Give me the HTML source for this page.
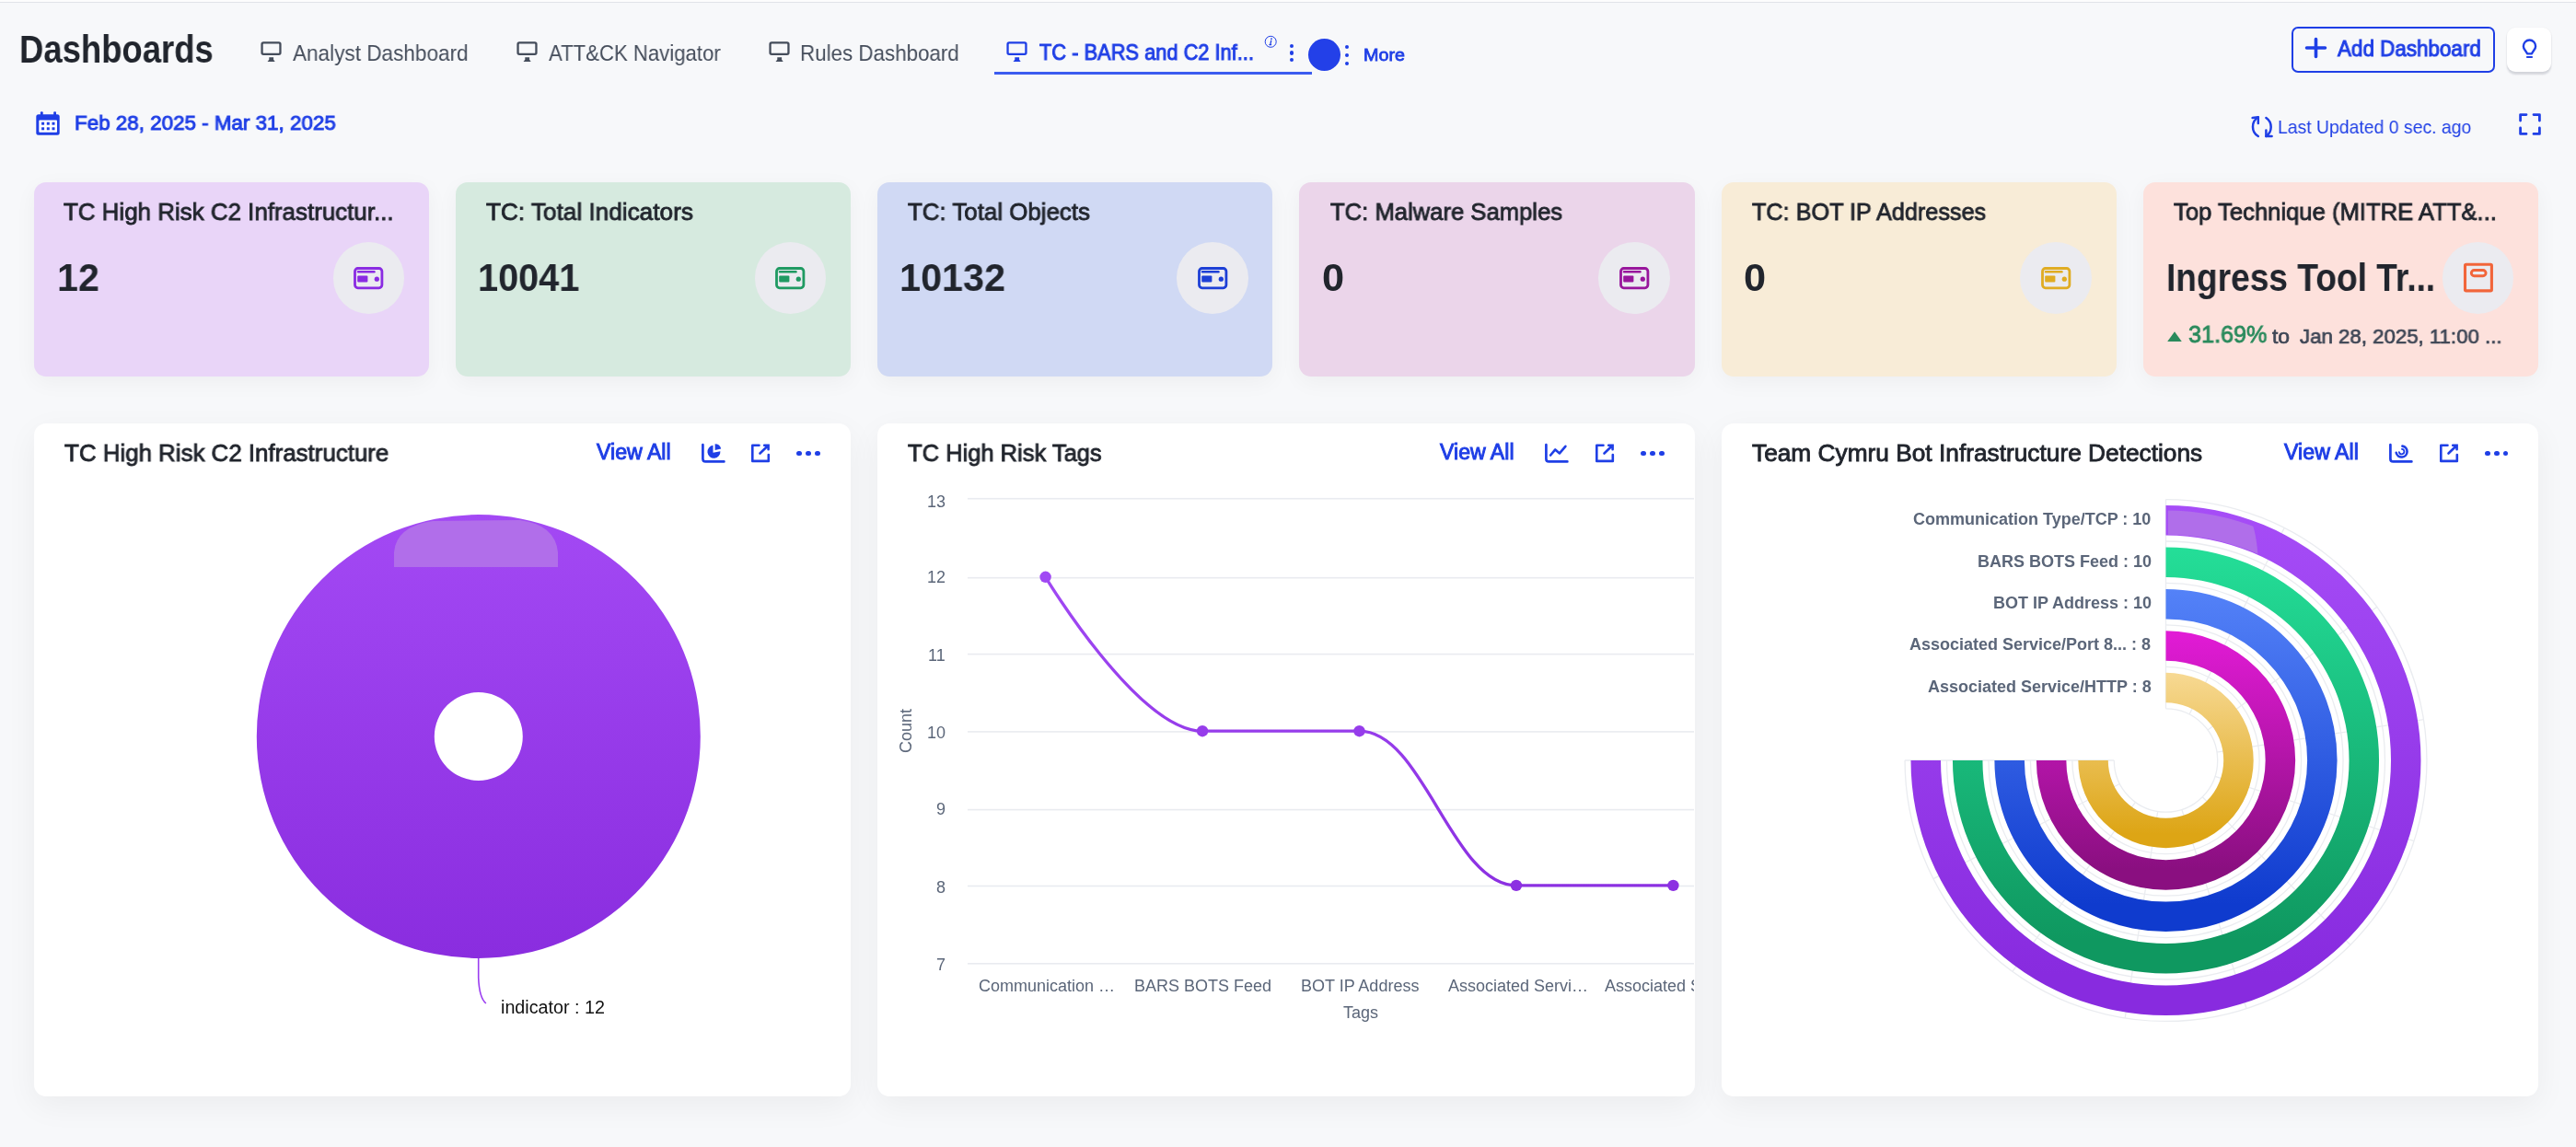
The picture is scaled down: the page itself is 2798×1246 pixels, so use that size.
<!DOCTYPE html><html><head><meta charset="utf-8"><style>
html,body{margin:0;padding:0;background:#f7f8fa}
body{width:2798px;height:1246px;position:relative;overflow:hidden;background:#f7f8fa;font-family:"Liberation Sans",sans-serif}
.t{position:absolute;line-height:0;white-space:pre;transform-origin:0 0;will-change:transform}
.abs{position:absolute}
.card{position:absolute;border-radius:13px;box-shadow:0 6px 24px rgba(0,0,0,0.045)}
.panel{position:absolute;border-radius:13px;background:#fff;box-shadow:0 10px 34px rgba(0,0,0,0.05);overflow:hidden}
svg{position:absolute;overflow:visible}
</style></head><body>
<div class="abs" style="left:0;top:0;width:2798px;height:2px;background:#fdfdfd"></div>
<div class="abs" style="left:0;top:2px;width:2798px;height:1px;background:#e1e3e8"></div>
<div class="t" style="left:20.89px;top:54.00px;font-size:42.00px;font-weight:700;color:#21252d;transform:scaleX(0.8685);">Dashboards</div>
<svg style="left:282.6px;top:45px" width="23" height="22" viewBox="0 0 23 22"><rect x="1.55" y="1.45" width="19.9" height="12.5" rx="1.6" fill="none" stroke="#454d5b" stroke-width="2.3"/><path d="M9.3 17.2 H14.1 V19.7 L15.7 21.9 H7.5 L9.3 19.7 Z" fill="#454d5b"/></svg>
<div class="t" style="left:318.00px;top:57.80px;font-size:24.80px;color:#454d5b;transform:scaleX(0.9096);">Analyst Dashboard</div>
<svg style="left:560.7px;top:45px" width="23" height="22" viewBox="0 0 23 22"><rect x="1.55" y="1.45" width="19.9" height="12.5" rx="1.6" fill="none" stroke="#454d5b" stroke-width="2.3"/><path d="M9.3 17.2 H14.1 V19.7 L15.7 21.9 H7.5 L9.3 19.7 Z" fill="#454d5b"/></svg>
<div class="t" style="left:595.50px;top:57.80px;font-size:24.80px;color:#454d5b;transform:scaleX(0.8933);">ATT&amp;CK Navigator</div>
<svg style="left:835.1px;top:45px" width="23" height="22" viewBox="0 0 23 22"><rect x="1.55" y="1.45" width="19.9" height="12.5" rx="1.6" fill="none" stroke="#454d5b" stroke-width="2.3"/><path d="M9.3 17.2 H14.1 V19.7 L15.7 21.9 H7.5 L9.3 19.7 Z" fill="#454d5b"/></svg>
<div class="t" style="left:868.70px;top:57.80px;font-size:24.80px;color:#454d5b;transform:scaleX(0.9016);">Rules Dashboard</div>
<svg style="left:1093px;top:45px" width="23" height="22" viewBox="0 0 23 22"><rect x="1.55" y="1.45" width="19.9" height="12.5" rx="1.6" fill="none" stroke="#1f3fe6" stroke-width="2.3"/><path d="M9.3 17.2 H14.1 V19.7 L15.7 21.9 H7.5 L9.3 19.7 Z" fill="#1f3fe6"/></svg>
<div class="t" style="left:1128.50px;top:56.80px;font-size:23.40px;color:#1f3fe6;transform:scaleX(0.9335);-webkit-text-stroke:0.042em currentColor;">TC - BARS and C2 Inf...</div>
<svg style="left:1373px;top:38px" width="15" height="15" viewBox="0 0 15 15"><circle cx="7.2" cy="7.3" r="6" fill="none" stroke="#1f3fe6" stroke-width="1"/><circle cx="8" cy="4.1" r="0.95" fill="#1f3fe6"/><path d="M7.7 6.2 L6.8 10.6 M5.9 10.6 H7.6" fill="none" stroke="#1f3fe6" stroke-width="1.3" stroke-linecap="round"/></svg>
<div class="abs" style="left:1400.8px;top:47.5px;width:4.4px;height:4.4px;border-radius:50%;background:#1f3fe6"></div><div class="abs" style="left:1400.8px;top:55.199999999999996px;width:4.4px;height:4.4px;border-radius:50%;background:#1f3fe6"></div><div class="abs" style="left:1400.8px;top:62.89999999999999px;width:4.4px;height:4.4px;border-radius:50%;background:#1f3fe6"></div>
<div class="abs" style="left:1080px;top:78px;width:345px;height:3px;background:#3b5cf0"></div>
<div class="abs" style="left:1421.1px;top:42.099999999999994px;width:35.4px;height:35.4px;border-radius:50%;background:#2340e8"></div>
<div class="abs" style="left:1460.5px;top:49.0px;width:4.4px;height:4.4px;border-radius:50%;background:#1f3fe6"></div><div class="abs" style="left:1460.5px;top:57.699999999999996px;width:4.4px;height:4.4px;border-radius:50%;background:#1f3fe6"></div><div class="abs" style="left:1460.5px;top:66.5px;width:4.4px;height:4.4px;border-radius:50%;background:#1f3fe6"></div>
<div class="t" style="left:1480.65px;top:59.80px;font-size:18.90px;color:#1f3fe6;transform:scaleX(1.0452);-webkit-text-stroke:0.042em currentColor;">More</div>
<div class="abs" style="left:2489.4px;top:29.4px;width:216.4px;height:45.8px;border:2px solid #1f3fe6;border-radius:7px"></div>
<svg style="left:2504px;top:41px" width="23" height="22" viewBox="0 0 23 22"><path d="M11.5 1.5V20.5M1.5 11H21.5" stroke="#1f3fe6" stroke-width="3.6" stroke-linecap="round"/></svg>
<div class="t" style="left:2539.20px;top:53.10px;font-size:23.00px;color:#1f3fe6;transform:scaleX(0.9748);-webkit-text-stroke:0.042em currentColor;">Add Dashboard</div>
<div class="abs" style="left:2723px;top:29.6px;width:48.2px;height:48.2px;border-radius:9px;background:#fff;box-shadow:0 2.5px 2px rgba(40,45,70,0.16),0 0 2px rgba(0,0,0,0.05)"></div>
<svg style="left:2739px;top:43px" width="18" height="22" viewBox="0 0 18 22"><path d="M6.2 15.4 L3.9 11.9 A6.6 6.6 0 1 1 13.1 11.9 L10.8 15.4 Z" fill="none" stroke="#1f3fe6" stroke-width="2.4" stroke-linejoin="round"/><path d="M6 19H11" stroke="#1f3fe6" stroke-width="2.2" stroke-linecap="round"/></svg>
<svg style="left:39px;top:120.5px" width="26" height="26" viewBox="0 0 26 26"><rect x="0.3" y="3.2" width="25.4" height="22.6" rx="2.5" fill="#1f3fe6"/><rect x="4.9" y="0.3" width="2.8" height="5" rx="1" fill="#1f3fe6"/><rect x="19.2" y="0.3" width="2.8" height="5" rx="1" fill="#1f3fe6"/><rect x="3.3" y="9.6" width="19.7" height="13.2" rx="0.8" fill="#fff"/><rect x="6.1" y="11.7" width="3" height="3" fill="#1f3fe6"/><rect x="6.1" y="17.3" width="3" height="3" fill="#1f3fe6"/><rect x="11.8" y="11.7" width="3" height="3" fill="#1f3fe6"/><rect x="11.8" y="17.3" width="3" height="3" fill="#1f3fe6"/><rect x="17.5" y="11.7" width="3" height="3" fill="#1f3fe6"/><rect x="17.5" y="17.3" width="3" height="3" fill="#1f3fe6"/></svg>
<div class="t" style="left:80.62px;top:133.30px;font-size:22.90px;color:#1f3fe6;transform:scaleX(0.9779);-webkit-text-stroke:0.042em currentColor;">Feb 28, 2025 - Mar 31, 2025</div>
<svg style="left:2444px;top:125px" width="26" height="26" viewBox="0 0 26 26"><path d="M8.8 23 A12.1 12.1 0 0 1 8.8 2.3" fill="none" stroke="#1f3fe6" stroke-width="2.5" stroke-linecap="round"/><path d="M2.6 3 L8.8 2.3 L8.8 9" fill="none" stroke="#1f3fe6" stroke-width="2.5" stroke-linecap="round" stroke-linejoin="round"/><path d="M17.4 3 A12.1 12.1 0 0 1 17.4 23" fill="none" stroke="#1f3fe6" stroke-width="2.5" stroke-linecap="round"/><path d="M17.4 16.5 L17.4 23 L23.6 23" fill="none" stroke="#1f3fe6" stroke-width="2.5" stroke-linecap="round" stroke-linejoin="round"/></svg>
<div class="t" style="left:2474.32px;top:138.00px;font-size:20.70px;color:#1f3fe6;transform:scaleX(0.9376);">Last Updated 0 sec. ago</div>
<svg style="left:2736px;top:123px" width="24" height="24" viewBox="0 0 24 24"><path d="M1.6 8V1.6H8M16 1.6H22.4V8M22.4 16V22.4H16M8 22.4H1.6V16" fill="none" stroke="#1f3fe6" stroke-width="2.8" stroke-linecap="round" stroke-linejoin="round"/></svg>
<div class="card" style="left:36.8px;top:198px;width:429.2px;height:210.6px;background:#e9d5f8"></div>
<div class="t" style="left:69.20px;top:230.10px;font-size:26.30px;color:#21252d;transform:scaleX(0.9854);-webkit-text-stroke:0.032em currentColor;">TC High Risk C2 Infrastructur...</div>
<div class="t" style="left:62.04px;top:301.50px;font-size:41.70px;font-weight:700;color:#21252d;transform:scaleX(0.9881);">12</div>
<div class="abs" style="left:361.55px;top:262.95px;width:77.7px;height:77.7px;border-radius:50%;background:#ebebf0"></div>
<svg style="left:384.20000000000005px;top:289.7px" width="33" height="25" viewBox="0 0 33 25"><rect x="1.5" y="1.5" width="29.4" height="21.3" rx="3.2" fill="none" stroke="#8a2be2" stroke-width="2.8"/><path d="M5 5.3H22.5" stroke="#8a2be2" stroke-width="2.4" stroke-linecap="round"/><rect x="4.2" y="9.4" width="11.2" height="7.2" rx="1" fill="#8a2be2"/><circle cx="25.3" cy="13.2" r="2.6" fill="#8a2be2"/></svg>
<div class="card" style="left:495.0px;top:198px;width:429.2px;height:210.6px;background:#d6eadf"></div>
<div class="t" style="left:528.00px;top:230.10px;font-size:26.30px;color:#21252d;transform:scaleX(0.9947);-webkit-text-stroke:0.032em currentColor;">TC: Total Indicators</div>
<div class="t" style="left:518.94px;top:301.50px;font-size:41.70px;font-weight:700;color:#21252d;transform:scaleX(0.9518);">10041</div>
<div class="abs" style="left:819.75px;top:262.95px;width:77.7px;height:77.7px;border-radius:50%;background:#ebebf0"></div>
<svg style="left:842.4px;top:289.7px" width="33" height="25" viewBox="0 0 33 25"><rect x="1.5" y="1.5" width="29.4" height="21.3" rx="3.2" fill="none" stroke="#1f9a62" stroke-width="2.8"/><path d="M5 5.3H22.5" stroke="#1f9a62" stroke-width="2.4" stroke-linecap="round"/><rect x="4.2" y="9.4" width="11.2" height="7.2" rx="1" fill="#1f9a62"/><circle cx="25.3" cy="13.2" r="2.6" fill="#1f9a62"/></svg>
<div class="card" style="left:953.1999999999999px;top:198px;width:429.2px;height:210.6px;background:#d0d9f4"></div>
<div class="t" style="left:985.60px;top:230.10px;font-size:26.30px;color:#21252d;transform:scaleX(0.9841);-webkit-text-stroke:0.032em currentColor;">TC: Total Objects</div>
<div class="t" style="left:977.12px;top:301.50px;font-size:41.70px;font-weight:700;color:#21252d;transform:scaleX(0.9928);">10132</div>
<div class="abs" style="left:1277.95px;top:262.95px;width:77.7px;height:77.7px;border-radius:50%;background:#ebebf0"></div>
<svg style="left:1300.6px;top:289.7px" width="33" height="25" viewBox="0 0 33 25"><rect x="1.5" y="1.5" width="29.4" height="21.3" rx="3.2" fill="none" stroke="#1d3fd6" stroke-width="2.8"/><path d="M5 5.3H22.5" stroke="#1d3fd6" stroke-width="2.4" stroke-linecap="round"/><rect x="4.2" y="9.4" width="11.2" height="7.2" rx="1" fill="#1d3fd6"/><circle cx="25.3" cy="13.2" r="2.6" fill="#1d3fd6"/></svg>
<div class="card" style="left:1411.3999999999999px;top:198px;width:429.2px;height:210.6px;background:#ebd5ea"></div>
<div class="t" style="left:1444.70px;top:230.10px;font-size:26.30px;color:#21252d;transform:scaleX(0.9744);-webkit-text-stroke:0.032em currentColor;">TC: Malware Samples</div>
<div class="t" style="left:1436.02px;top:301.50px;font-size:41.70px;font-weight:700;color:#21252d;transform:scaleX(1.0400);">0</div>
<div class="abs" style="left:1736.15px;top:262.95px;width:77.7px;height:77.7px;border-radius:50%;background:#ebebf0"></div>
<svg style="left:1758.8px;top:289.7px" width="33" height="25" viewBox="0 0 33 25"><rect x="1.5" y="1.5" width="29.4" height="21.3" rx="3.2" fill="none" stroke="#98169c" stroke-width="2.8"/><path d="M5 5.3H22.5" stroke="#98169c" stroke-width="2.4" stroke-linecap="round"/><rect x="4.2" y="9.4" width="11.2" height="7.2" rx="1" fill="#98169c"/><circle cx="25.3" cy="13.2" r="2.6" fill="#98169c"/></svg>
<div class="card" style="left:1869.6px;top:198px;width:429.2px;height:210.6px;background:#f8ecd7"></div>
<div class="t" style="left:1902.60px;top:230.10px;font-size:26.30px;color:#21252d;transform:scaleX(0.9592);-webkit-text-stroke:0.032em currentColor;">TC: BOT IP Addresses</div>
<div class="t" style="left:1894.32px;top:301.50px;font-size:41.70px;font-weight:700;color:#21252d;transform:scaleX(1.0400);">0</div>
<div class="abs" style="left:2194.35px;top:262.95px;width:77.7px;height:77.7px;border-radius:50%;background:#ebebf0"></div>
<svg style="left:2217.0px;top:289.7px" width="33" height="25" viewBox="0 0 33 25"><rect x="1.5" y="1.5" width="29.4" height="21.3" rx="3.2" fill="none" stroke="#e0ac22" stroke-width="2.8"/><path d="M5 5.3H22.5" stroke="#e0ac22" stroke-width="2.4" stroke-linecap="round"/><rect x="4.2" y="9.4" width="11.2" height="7.2" rx="1" fill="#e0ac22"/><circle cx="25.3" cy="13.2" r="2.6" fill="#e0ac22"/></svg>
<div class="card" style="left:2327.8px;top:198px;width:429.2px;height:210.6px;background:#fde1dc"></div>
<div class="t" style="left:2361.10px;top:230.10px;font-size:26.30px;color:#21252d;transform:scaleX(0.9746);-webkit-text-stroke:0.032em currentColor;">Top Technique (MITRE ATT&amp;...</div>
<div class="t" style="left:2353.43px;top:301.50px;font-size:41.70px;font-weight:700;color:#21252d;transform:scaleX(0.8904);">Ingress Tool Tr...</div>
<div class="abs" style="left:2652.55px;top:262.95px;width:77.7px;height:77.7px;border-radius:50%;background:#ebebf0"></div>
<svg style="left:2675.2000000000003px;top:286.2px" width="33" height="32" viewBox="0 0 33 32"><rect x="2.5" y="1.3" width="28.9" height="28.6" rx="1.2" fill="none" stroke="#f2653a" stroke-width="3.1"/><rect x="9.3" y="7.5" width="15.8" height="6.2" rx="3.1" fill="none" stroke="#f2653a" stroke-width="2.9"/></svg>
<svg style="left:2354px;top:360.4px" width="16" height="11.2" viewBox="0 0 16 11.2"><path d="M8 0.3 L15.8 11 L0.2 11 Z" fill="#2a8a5c"/></svg>
<div class="t" style="left:2376.72px;top:362.90px;font-size:25.60px;color:#2a8a5c;transform:scaleX(0.9847);-webkit-text-stroke:0.032em currentColor;">31.69%</div>
<div class="t" style="left:2468.40px;top:364.90px;font-size:22.90px;color:#3f4756;-webkit-text-stroke:0.032em currentColor;">to</div>
<div class="t" style="left:2497.50px;top:364.90px;font-size:22.90px;color:#3f4756;transform:scaleX(0.9711);-webkit-text-stroke:0.032em currentColor;">Jan 28, 2025, 11:00 ...</div>
<div class="panel" style="left:36.8px;top:460px;width:887.4px;height:730.6px"></div>
<div class="panel" style="left:953.2px;top:460px;width:887.4px;height:730.6px"></div>
<div class="panel" style="left:1869.6px;top:460px;width:887.4px;height:730.6px"></div>
<div class="t" style="left:70.00px;top:492.20px;font-size:26.00px;color:#21252d;transform:scaleX(0.9952);-webkit-text-stroke:0.032em currentColor;">TC High Risk C2 Infrastructure</div>
<div class="t" style="left:647.60px;top:490.80px;font-size:23.10px;color:#1f3fe6;transform:scaleX(1.0025);-webkit-text-stroke:0.042em currentColor;">View All</div>
<svg style="left:761.5px;top:482px" width="26" height="21" viewBox="0 0 26 21"><path d="M1.4 1.2V16.4Q1.4 19.4 4.4 19.4H24.4" fill="none" stroke="#1f3fe6" stroke-width="2.7" stroke-linecap="round"/><path d="M12.5 9.8 L12.5 1.8 A7 7 0 1 0 20.4 8.2 Z" fill="#1f3fe6"/><path d="M14.6 7.0 L14.6 0.2 A6.8 6.8 0 0 1 21.2 5.4 Z" fill="#1f3fe6"/></svg>
<svg style="left:816.4px;top:482px" width="21" height="21" viewBox="0 0 21 21"><path d="M8.5 1.7H1.3V18.9H18.8V12" fill="none" stroke="#1f3fe6" stroke-width="2.6" stroke-linecap="round" stroke-linejoin="round"/><path d="M9.5 10.5L18.3 2M14.2 1.7H18.6V6.3" fill="none" stroke="#1f3fe6" stroke-width="2.6" stroke-linecap="round" stroke-linejoin="miter"/></svg>
<div class="abs" style="left:865.4px;top:489.5px;width:5.8px;height:5.8px;border-radius:50%;background:#1f3fe6"></div><div class="abs" style="left:875.1999999999999px;top:489.5px;width:5.8px;height:5.8px;border-radius:50%;background:#1f3fe6"></div><div class="abs" style="left:885.0px;top:489.5px;width:5.8px;height:5.8px;border-radius:50%;background:#1f3fe6"></div>
<div class="t" style="left:986.30px;top:492.20px;font-size:26.00px;color:#21252d;transform:scaleX(0.9808);-webkit-text-stroke:0.032em currentColor;">TC High Risk Tags</div>
<div class="t" style="left:1564.00px;top:490.80px;font-size:23.10px;color:#1f3fe6;transform:scaleX(1.0012);-webkit-text-stroke:0.042em currentColor;">View All</div>
<svg style="left:1678.1px;top:482px" width="26" height="21" viewBox="0 0 26 21"><path d="M1.4 1.2V16.4Q1.4 19.4 4.4 19.4H24.4" fill="none" stroke="#1f3fe6" stroke-width="2.7" stroke-linecap="round"/><path d="M6.1 12.5 L11.3 6.4 L16 10.4 L22.4 2.8" fill="none" stroke="#1f3fe6" stroke-width="2.6" stroke-linecap="round" stroke-linejoin="round"/></svg>
<svg style="left:1733.2px;top:482px" width="21" height="21" viewBox="0 0 21 21"><path d="M8.5 1.7H1.3V18.9H18.8V12" fill="none" stroke="#1f3fe6" stroke-width="2.6" stroke-linecap="round" stroke-linejoin="round"/><path d="M9.5 10.5L18.3 2M14.2 1.7H18.6V6.3" fill="none" stroke="#1f3fe6" stroke-width="2.6" stroke-linecap="round" stroke-linejoin="miter"/></svg>
<div class="abs" style="left:1782.1999999999998px;top:489.5px;width:5.8px;height:5.8px;border-radius:50%;background:#1f3fe6"></div><div class="abs" style="left:1791.9999999999998px;top:489.5px;width:5.8px;height:5.8px;border-radius:50%;background:#1f3fe6"></div><div class="abs" style="left:1801.7999999999997px;top:489.5px;width:5.8px;height:5.8px;border-radius:50%;background:#1f3fe6"></div>
<div class="t" style="left:1903.00px;top:492.20px;font-size:26.00px;color:#21252d;transform:scaleX(1.0107);-webkit-text-stroke:0.032em currentColor;">Team Cymru Bot Infrastructure Detections</div>
<div class="t" style="left:2480.70px;top:490.80px;font-size:23.10px;color:#1f3fe6;transform:scaleX(1.0050);-webkit-text-stroke:0.042em currentColor;">View All</div>
<svg style="left:2595.1px;top:482px" width="26" height="21" viewBox="0 0 26 21"><path d="M1.4 1.2V16.4Q1.4 19.4 4.4 19.4H24.4" fill="none" stroke="#1f3fe6" stroke-width="2.7" stroke-linecap="round"/><path d="M14.4 2.6 A6 6 0 1 1 7.7 9.8" fill="none" stroke="#1f3fe6" stroke-width="2.6" stroke-linecap="round"/><path d="M13.9 5.8 A2.8 2.8 0 1 1 10.9 9.2" fill="none" stroke="#1f3fe6" stroke-width="1.8" stroke-linecap="round"/></svg>
<svg style="left:2650.4px;top:482px" width="21" height="21" viewBox="0 0 21 21"><path d="M8.5 1.7H1.3V18.9H18.8V12" fill="none" stroke="#1f3fe6" stroke-width="2.6" stroke-linecap="round" stroke-linejoin="round"/><path d="M9.5 10.5L18.3 2M14.2 1.7H18.6V6.3" fill="none" stroke="#1f3fe6" stroke-width="2.6" stroke-linecap="round" stroke-linejoin="miter"/></svg>
<div class="abs" style="left:2699.1px;top:489.5px;width:5.8px;height:5.8px;border-radius:50%;background:#1f3fe6"></div><div class="abs" style="left:2708.9px;top:489.5px;width:5.8px;height:5.8px;border-radius:50%;background:#1f3fe6"></div><div class="abs" style="left:2718.7px;top:489.5px;width:5.8px;height:5.8px;border-radius:50%;background:#1f3fe6"></div>
<svg style="left:0;top:0" width="940" height="1246" viewBox="0 0 940 1246">
<defs><linearGradient id="dg" x1="0" y1="0" x2="0" y2="1"><stop offset="0" stop-color="#a349f4"/><stop offset="1" stop-color="#8a2ddf"/></linearGradient>
<clipPath id="dclip"><circle cx="519.8" cy="800" r="241"/></clipPath></defs>
<path fill-rule="evenodd" fill="url(#dg)" d="M278.79999999999995 800 A241 241 0 1 0 760.8 800 A241 241 0 1 0 278.79999999999995 800 Z M471.79999999999995 800 A48 48 0 1 0 567.8 800 A48 48 0 1 0 471.79999999999995 800 Z"/>
<path clip-path="url(#dclip)" d="M428 616 V600 Q430 572 470 566 L565 565 Q603 570 606 600 V616 Z" fill="#b16eea"/>
<path d="M519.7 1041 L519.7 1062 Q520.5 1084 527.9 1090" fill="none" stroke="#9a3df0" stroke-width="1.6"/>
</svg>
<div class="t" style="left:544.49px;top:1094.00px;font-size:19.60px;color:#111;transform:scaleX(1.0064);">indicator : 12</div>
<div class="abs" style="left:953.2px;top:460px;width:886.8px;height:730.6px;overflow:hidden;border-radius:13px"><svg style="left:-953.2px;top:-460px" width="2798" height="1246" viewBox="0 0 2798 1246"><rect x="1051" y="540.90" width="900" height="1.6" fill="#e9ebf0"/><rect x="1051" y="626.90" width="900" height="1.6" fill="#e9ebf0"/><rect x="1051" y="709.80" width="900" height="1.6" fill="#e9ebf0"/><rect x="1051" y="794.10" width="900" height="1.6" fill="#e9ebf0"/><rect x="1051" y="878.80" width="900" height="1.6" fill="#e9ebf0"/><rect x="1051" y="961.70" width="900" height="1.6" fill="#e9ebf0"/><rect x="1051" y="1046.00" width="900" height="1.6" fill="#e9ebf0"/><defs><linearGradient id="lg" gradientUnits="userSpaceOnUse" x1="0" y1="600" x2="0" y2="990"><stop offset="0" stop-color="#a24bf5"/><stop offset="1" stop-color="#8a2ee0"/></linearGradient></defs><path d="M1135.60 626.80 C1135.60 626.80 1236.42 794.20 1306.05 794.20 C1355.73 794.20 1426.84 794.20 1476.50 794.20 C1546.16 794.20 1577.29 961.90 1646.95 961.90 C1696.61 961.90 1817.40 961.90 1817.40 961.90" fill="none" stroke="url(#lg)" stroke-width="3.3"/><circle cx="1135.60" cy="626.80" r="6.2" fill="url(#lg)"/><circle cx="1306.05" cy="794.20" r="6.2" fill="url(#lg)"/><circle cx="1476.50" cy="794.20" r="6.2" fill="url(#lg)"/><circle cx="1646.95" cy="961.90" r="6.2" fill="url(#lg)"/><circle cx="1817.40" cy="961.90" r="6.2" fill="url(#lg)"/></svg></div>
<div class="abs" style="left:953.2px;top:0;width:886.8px;height:1246px;overflow:hidden"><div class="t" style="left:109.55px;top:1071.20px;font-size:18.00px;color:#5b6679;">Communication …</div>
<div class="t" style="left:279.05px;top:1071.20px;font-size:18.00px;color:#5b6679;">BARS BOTS Feed</div>
<div class="t" style="left:459.55px;top:1071.20px;font-size:18.00px;color:#5b6679;">BOT IP Address</div>
<div class="t" style="left:619.55px;top:1071.20px;font-size:18.00px;color:#5b6679;">Associated Servi…</div>
<div class="t" style="left:789.70px;top:1071.20px;font-size:18.00px;color:#5b6679;">Associated Service/HTTP</div>
</div>
<div class="t" style="left:1007.00px;top:544.90px;font-size:18.00px;color:#5b6679;">13</div>
<div class="t" style="left:1007.00px;top:626.90px;font-size:18.00px;color:#5b6679;">12</div>
<div class="t" style="left:1008.00px;top:711.70px;font-size:18.00px;color:#5b6679;">11</div>
<div class="t" style="left:1007.00px;top:795.80px;font-size:18.00px;color:#5b6679;">10</div>
<div class="t" style="left:1017.00px;top:878.90px;font-size:18.00px;color:#5b6679;">9</div>
<div class="t" style="left:1017.00px;top:964.00px;font-size:18.00px;color:#5b6679;">8</div>
<div class="t" style="left:1017.00px;top:1047.60px;font-size:18.00px;color:#5b6679;">7</div>
<div class="t" style="left:1458.50px;top:1100.00px;font-size:18.00px;color:#5b6679;">Tags</div>
<div class="t" style="left:983.5px;top:793.6px;font-size:18px;color:#5b6679;transform:translate(0,0) rotate(-90deg) translate(-50%,0);transform-origin:0 0">Count</div>
<svg style="left:0;top:0" width="2798" height="1246" viewBox="0 0 2798 1246"><defs><linearGradient id="rg0" gradientUnits="userSpaceOnUse" x1="0" y1="730.8" x2="0" y2="921.2"><stop offset="0" stop-color="#f7d993"/><stop offset="0.92" stop-color="#dda515"/></linearGradient><linearGradient id="rg1" gradientUnits="userSpaceOnUse" x1="0" y1="685.35" x2="0" y2="966.65"><stop offset="0" stop-color="#e21bd6"/><stop offset="0.92" stop-color="#8a0f80"/></linearGradient><linearGradient id="rg2" gradientUnits="userSpaceOnUse" x1="0" y1="639.9" x2="0" y2="1012.1"><stop offset="0" stop-color="#5482f8"/><stop offset="0.92" stop-color="#0f3bce"/></linearGradient><linearGradient id="rg3" gradientUnits="userSpaceOnUse" x1="0" y1="594.45" x2="0" y2="1057.55"><stop offset="0" stop-color="#24de98"/><stop offset="0.92" stop-color="#0f9860"/></linearGradient><linearGradient id="rg4" gradientUnits="userSpaceOnUse" x1="0" y1="549.0" x2="0" y2="1103.0"><stop offset="0" stop-color="#a64df7"/><stop offset="0.92" stop-color="#882bdf"/></linearGradient></defs><path d="M2352.50 769.80 A56.20 56.20 0 1 1 2296.30 826.00" fill="none" stroke="#eaecf0" stroke-width="1.3"/><path d="M2352.50 724.35 A101.65 101.65 0 1 1 2250.85 826.00" fill="none" stroke="#eaecf0" stroke-width="1.3"/><path d="M2352.50 678.90 A147.10 147.10 0 1 1 2205.40 826.00" fill="none" stroke="#eaecf0" stroke-width="1.3"/><path d="M2352.50 633.45 A192.55 192.55 0 1 1 2159.95 826.00" fill="none" stroke="#eaecf0" stroke-width="1.3"/><path d="M2352.50 588.00 A238.00 238.00 0 1 1 2114.50 826.00" fill="none" stroke="#eaecf0" stroke-width="1.3"/><path d="M2352.50 542.55 A283.45 283.45 0 1 1 2069.05 826.00" fill="none" stroke="#eaecf0" stroke-width="1.3"/><path d="M2352.50 769.80 L2352.50 542.55" stroke="#eaecf0" stroke-width="1.3"/><path d="M2378.01 775.93 L2481.18 573.44" stroke="#eaecf0" stroke-width="1.3"/><path d="M2397.97 792.97 L2581.82 659.39" stroke="#eaecf0" stroke-width="1.3"/><path d="M2408.01 817.21 L2632.46 781.66" stroke="#eaecf0" stroke-width="1.3"/><path d="M2405.95 843.37 L2622.08 913.59" stroke="#eaecf0" stroke-width="1.3"/><path d="M2392.24 865.74 L2552.93 1026.43" stroke="#eaecf0" stroke-width="1.3"/><path d="M2369.87 879.45 L2440.09 1095.58" stroke="#eaecf0" stroke-width="1.3"/><path d="M2343.71 881.51 L2308.16 1105.96" stroke="#eaecf0" stroke-width="1.3"/><path d="M2319.47 871.47 L2185.89 1055.32" stroke="#eaecf0" stroke-width="1.3"/><path d="M2302.43 851.51 L2099.94 954.68" stroke="#eaecf0" stroke-width="1.3"/><path d="M2296.30 826.00 L2069.05 826.00" stroke="#eaecf0" stroke-width="1.3"/><path d="M2352.50 730.80 A95.20 95.20 0 1 1 2257.30 826.00 L2289.80 826.00 A62.70 62.70 0 1 0 2352.50 763.30 Z" fill="url(#rg0)"/><path d="M2352.50 685.35 A140.65 140.65 0 1 1 2211.85 826.00 L2244.35 826.00 A108.15 108.15 0 1 0 2352.50 717.85 Z" fill="url(#rg1)"/><path d="M2352.50 639.90 A186.10 186.10 0 1 1 2166.40 826.00 L2198.90 826.00 A153.60 153.60 0 1 0 2352.50 672.40 Z" fill="url(#rg2)"/><path d="M2352.50 594.45 A231.55 231.55 0 1 1 2120.95 826.00 L2153.45 826.00 A199.05 199.05 0 1 0 2352.50 626.95 Z" fill="url(#rg3)"/><path d="M2352.50 549.00 A277.00 277.00 0 1 1 2075.50 826.00 L2108.00 826.00 A244.50 244.50 0 1 0 2352.50 581.50 Z" fill="url(#rg4)"/><clipPath id="hclip"><path d="M2352.50 554.50 A271.50 271.50 0 0 1 2624.00 826.00 L2597.80 826.00 A245.30 245.30 0 0 0 2352.50 580.70 Z"/></clipPath><path clip-path="url(#hclip)" d="M2354.8 540 H2420 Q2448 545 2452.4 602 H2354.8 Z" fill="#b06eea"/></svg>
<div class="t" style="left:2078.00px;top:564.05px;font-size:18.00px;font-weight:700;color:#5b6679;">Communication Type/TCP : 10</div>
<div class="t" style="left:2148.00px;top:609.50px;font-size:18.00px;font-weight:700;color:#5b6679;">BARS BOTS Feed : 10</div>
<div class="t" style="left:2165.00px;top:654.95px;font-size:18.00px;font-weight:700;color:#5b6679;">BOT IP Address : 10</div>
<div class="t" style="left:2074.00px;top:700.40px;font-size:18.00px;font-weight:700;color:#5b6679;">Associated Service/Port 8... : 8</div>
<div class="t" style="left:2094.00px;top:745.85px;font-size:18.00px;font-weight:700;color:#5b6679;">Associated Service/HTTP : 8</div>
</body></html>
